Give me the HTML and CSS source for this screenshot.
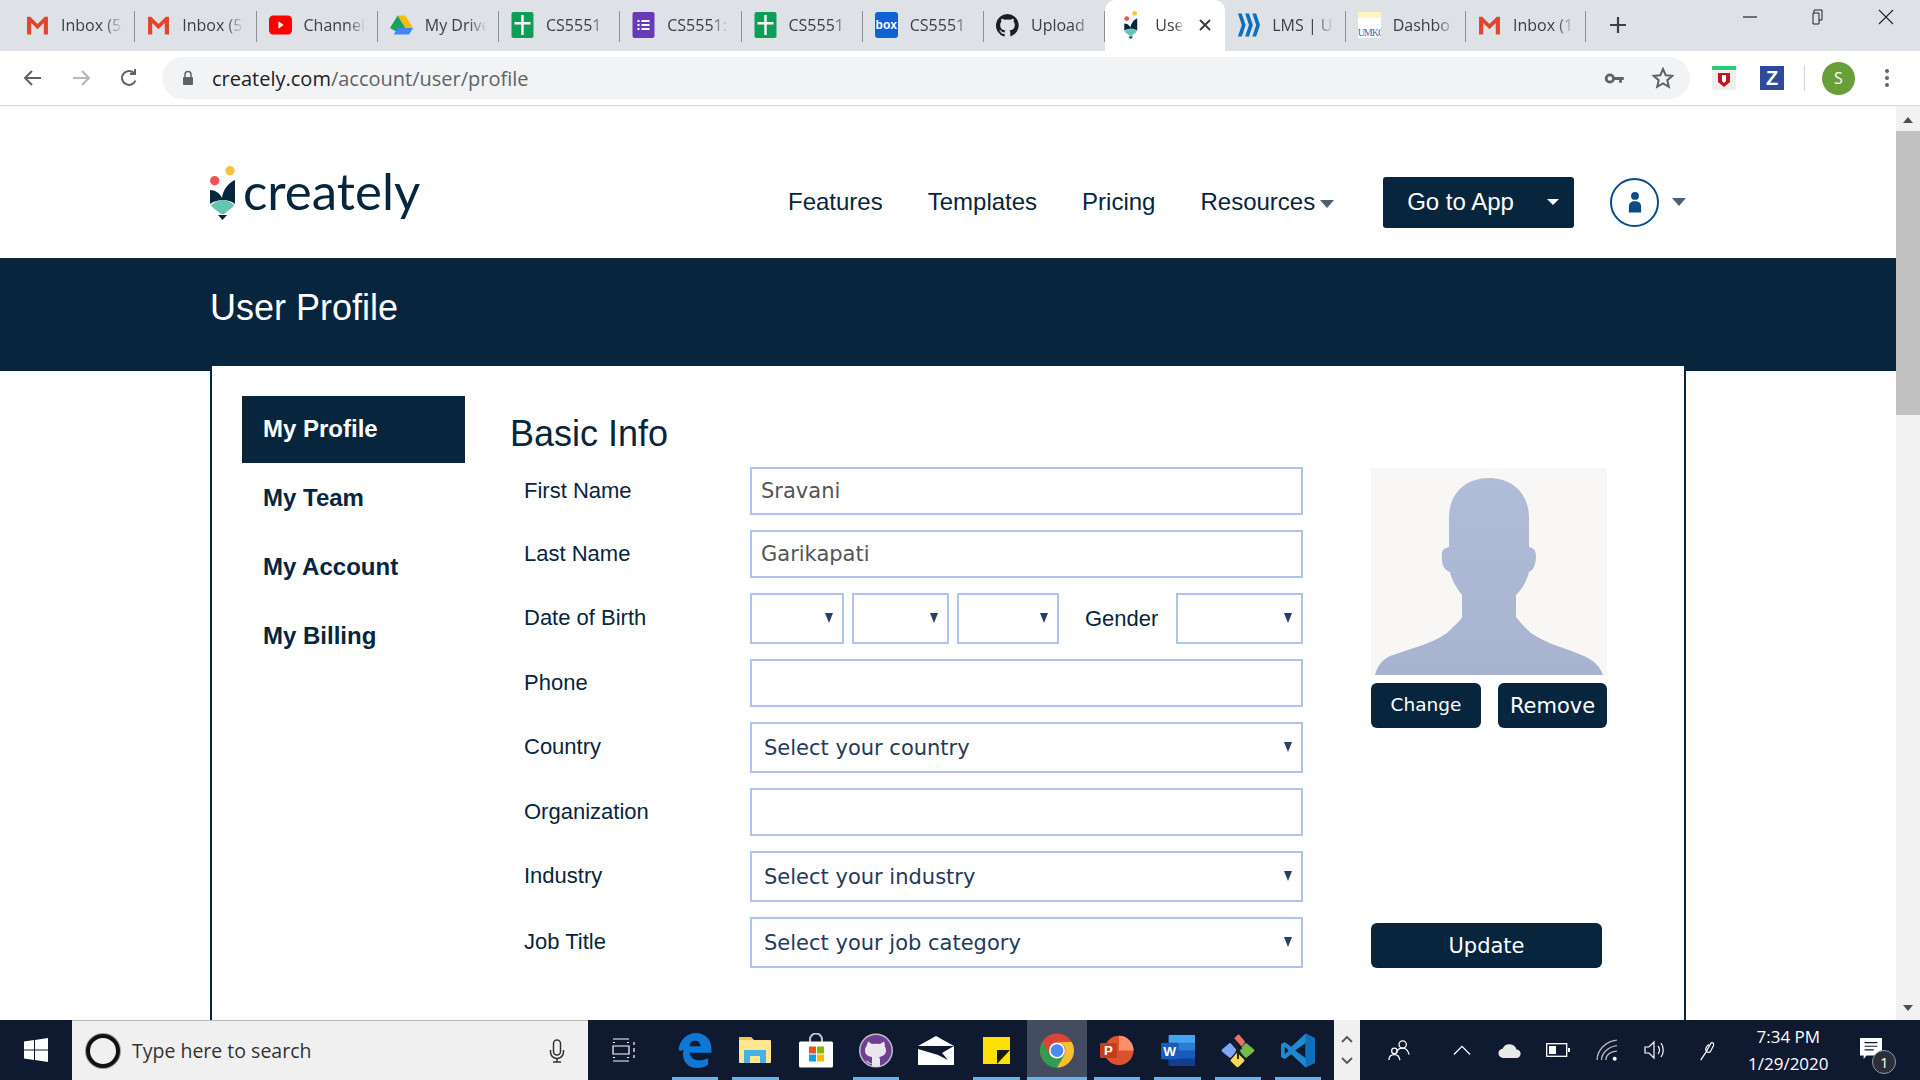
FILE: index.html
```html
<!DOCTYPE html>
<html lang="en">
<head>
  <meta charset="UTF-8">
  <title>User Profile</title>
  <link rel="stylesheet" href="styles.css">
</head>
<body>

<svg class="defs" width="0" height="0">
  <symbol id="gmail" viewBox="0 0 22 22">
    <path d="M1 3h3l7 7 7-7h3v17h-4V9l-6 6-6-6v11H1z" fill="#e0452f"/>
  </symbol>
  <symbol id="sheets" viewBox="0 0 22 26">
    <rect width="22" height="26" rx="2" fill="#0f9d58"/>
    <path d="M9.800 3h2.400v7H19v2.400h-6.800V23H9.800V12.400H3V10h6.800z" fill="#fff"/>
  </symbol>
  <symbol id="creately" viewBox="0 0 26 54">
    <circle cx="20" cy="4.7" r="4.7" fill="#fdc33f"/>
    <circle cx="4.7" cy="14.7" r="4.7" fill="#f0524f"/>
    <path d="M0 24c5 0 10 3 12 8 1-8 6-15 13-18v24c-4-3-8-4-12-4s-9 1-13 4z" fill="#07263d"/>
    <path d="M1 39c3-3 8-5 12-5s8 2 11 5l-1 2-9 7h-3l-9-7z" fill="#65c6b4"/>
    <path d="M8 49h9l-4.500 5z" fill="#07263d"/>
  </symbol>
</svg>

<div class="browser">
  <div class="tabstrip">
    <div class="tab"><div class="tab-inner">
      <svg class="favicon"><use href="#gmail"/></svg>
      <span class="tab-title">Inbox (5</span>
    </div></div>
    <div class="tab"><div class="tab-inner">
      <svg class="favicon"><use href="#gmail"/></svg>
      <span class="tab-title">Inbox (5</span>
    </div></div>
    <div class="tab"><div class="tab-inner">
      <svg class="favicon" viewBox="0 0 22 22"><rect y="2" width="22" height="18" rx="4" fill="#f00"/><path d="M9 7.500l5 3.500-5 3.500z" fill="#fff"/></svg>
      <span class="tab-title">Channel</span>
    </div></div>
    <div class="tab"><div class="tab-inner">
      <svg class="favicon" viewBox="0 0 24 22"><path d="M8 1h8l8 13h-8z" fill="#fbbc04"/><path d="M8 1l8 13-4 7L0 14z" fill="#0f9d58" opacity=".95"/><path d="M8 14h16l-4 7H4z" fill="#4285f4"/></svg>
      <span class="tab-title">My Drive</span>
    </div></div>
    <div class="tab"><div class="tab-inner">
      <svg class="favicon"><use href="#sheets"/></svg>
      <span class="tab-title">CS5551</span>
    </div></div>
    <div class="tab"><div class="tab-inner">
      <svg class="favicon" viewBox="0 0 22 26"><rect width="22" height="26" rx="2" fill="#673ab7"/><path d="M5 8h2v2H5zM9 8h8v2H9zM5 12h2v2H5zM9 12h8v2H9zM5 16h2v2H5zM9 16h8v2H9z" fill="#fff"/></svg>
      <span class="tab-title">CS5551:</span>
    </div></div>
    <div class="tab"><div class="tab-inner">
      <svg class="favicon"><use href="#sheets"/></svg>
      <span class="tab-title">CS5551</span>
    </div></div>
    <div class="tab"><div class="tab-inner">
      <span class="favicon box-icon">box</span>
      <span class="tab-title">CS5551</span>
    </div></div>
    <div class="tab"><div class="tab-inner">
      <svg class="favicon" viewBox="0 0 24 24"><path d="M12 .5a12 12 0 0 0-3.800 23.400c.6.100.8-.3.800-.6v-2.100c-3.300.7-4-1.600-4-1.600-.5-1.400-1.300-1.800-1.300-1.800-1.100-.7.100-.7.100-.7 1.200.1 1.800 1.200 1.800 1.200 1.100 1.800 2.800 1.300 3.500 1 .1-.8.400-1.300.8-1.600-2.700-.3-5.500-1.300-5.500-5.900 0-1.300.5-2.400 1.200-3.200-.1-.3-.5-1.500.1-3.200 0 0 1-.3 3.300 1.200a11.500 11.500 0 0 1 6 0c2.300-1.500 3.300-1.200 3.300-1.200.6 1.700.2 2.900.1 3.200.8.800 1.200 1.900 1.200 3.200 0 4.600-2.800 5.600-5.500 5.900.4.400.8 1.100.8 2.200v3.300c0 .3.200.7.800.6A12 12 0 0 0 12 .5z" fill="#1b1f23"/></svg>
      <span class="tab-title">Upload</span>
    </div></div>
    <div class="tab tab-active"><div class="tab-inner">
      <svg class="favicon favicon-small"><use href="#creately"/></svg>
      <span class="tab-title">User</span>
      <svg class="tab-close" viewBox="0 0 12 12"><path d="M1 1l10 10M11 1L1 11" stroke="#3c4043" stroke-width="2"/></svg>
    </div></div>
    <div class="tab"><div class="tab-inner">
      <svg class="favicon" viewBox="0 0 24 24"><path d="M1 0h4l4 12-4 12H1l4-12zM8.500 0h4l4 12-4 12h-4l4-12zM16 0h4l4 12-4 12h-4l4-12z" fill="#0d6ebe"/></svg>
      <span class="tab-title">LMS | U</span>
    </div></div>
    <div class="tab"><div class="tab-inner">
      <span class="favicon umkc-icon">UMKC</span>
      <span class="tab-title">Dashbo</span>
    </div></div>
    <div class="tab"><div class="tab-inner">
      <svg class="favicon"><use href="#gmail"/></svg>
      <span class="tab-title">Inbox (1</span>
    </div></div>
    <svg class="new-tab" viewBox="0 0 18 18"><path d="M9 1v16M1 9h16" stroke="#3c4043" stroke-width="2.200"/></svg>
    <div class="window-btns">
      <svg viewBox="0 0 16 16"><path d="M1 8h14" stroke="#222" stroke-width="1.200"/></svg>
      <svg viewBox="0 0 16 16"><path d="M4 4V1h8v10h-3M3 4h6v11H3z" fill="none" stroke="#222"/></svg>
      <svg viewBox="0 0 16 16"><path d="M1 1l14 14M15 1L1 15" stroke="#222" stroke-width="1.100"/></svg>
    </div>
  </div>

  <div class="toolbar">
    <svg class="tool-icon" viewBox="0 0 20 20"><path d="M18 10H3M9 3l-7 7 7 7" fill="none" stroke="#5f6368" stroke-width="2"/></svg>
    <svg class="tool-icon" viewBox="0 0 20 20"><path d="M2 10h15M11 3l7 7-7 7" fill="none" stroke="#b4b6b9" stroke-width="2"/></svg>
    <svg class="tool-icon" viewBox="0 0 20 20"><path d="M16.500 12.500A7 7 0 1 1 15 5M16 1v5h-5" fill="none" stroke="#5f6368" stroke-width="2"/></svg>
    <div class="omnibox">
      <svg class="lock" viewBox="0 0 12 16"><path d="M3 7V4.500a3 3 0 0 1 6 0V7" fill="none" stroke="#5f6368" stroke-width="1.500"/><rect x="1" y="7" width="10" height="8" rx="1" fill="#5f6368"/></svg>
      <span class="url"><b>creately.com</b>/account/user/profile</span>
      <svg class="key" viewBox="0 0 22 14"><circle cx="6" cy="7" r="4" fill="none" stroke="#5f6368" stroke-width="3"/><path d="M10 5.500h11v3h-2v3h-3v-3h-6z" fill="#5f6368"/></svg>
      <svg class="star" viewBox="0 0 22 22"><path d="M11 2l2.700 6.200 6.700.6-5.100 4.400 1.500 6.600L11 16.300l-5.800 3.500 1.500-6.600-5.100-4.400 6.700-.6z" fill="none" stroke="#5f6368" stroke-width="2"/></svg>
    </div>
    <svg class="ext-icon" viewBox="0 0 24 24"><rect width="24" height="24" rx="1" fill="#eee"/><rect width="24" height="4" fill="#2ecc71"/><path d="M6 7h12v9l-6 5-6-5z" fill="#c4161c"/><path d="M10 9h4v6l-2 2-2-2z" fill="#fff"/></svg>
    <span class="ext-z">Z</span>
    <span class="toolbar-sep"></span>
    <span class="profile-dot">S</span>
    <svg class="menu-dots" viewBox="0 0 4 18"><circle cx="2" cy="2" r="2"/><circle cx="2" cy="9" r="2"/><circle cx="2" cy="16" r="2"/></svg>
  </div>

  <div class="viewport">
    <div class="page">
      <header class="site-header">
        <div class="logo">
          <svg class="logo-mark"><use href="#creately"/></svg>
          <span class="logo-text">creately</span>
        </div>
        <nav class="nav">
          <a>Features</a>
          <a>Templates</a>
          <a>Pricing</a>
          <a class="nav-caret">Resources</a>
        </nav>
        <button class="app-btn">Go to App</button>
        <span class="user-circle">
          <svg viewBox="0 0 16 24"><circle cx="8" cy="5" r="4.500" fill="#0a4c86"/><path d="M1 24v-7c0-4 3-6 7-6s7 2 7 6v7z" fill="#0a4c86"/></svg>
        </span>
        <span class="user-caret"></span>
      </header>

      <div class="banner">
        <h1>User Profile</h1>
      </div>

      <div class="card">
        <ul class="side-menu">
          <li class="active">My Profile</li>
          <li>My Team</li>
          <li>My Account</li>
          <li>My Billing</li>
        </ul>

        <section class="profile">
          <h2>Basic Info</h2>
          <div class="profile-body">
            <form class="fields">
              <div class="row">
                <label>First Name</label>
                <input class="text-input" type="text" value="Sravani">
              </div>
              <div class="row">
                <label>Last Name</label>
                <input class="text-input" type="text" value="Garikapati">
              </div>
              <div class="row">
                <label>Date of Birth</label>
                <div class="select sel-day"><select></select></div>
                <div class="select sel-month"><select></select></div>
                <div class="select sel-year"><select></select></div>
                <label class="gender-label">Gender</label>
                <div class="select sel-gender"><select></select></div>
              </div>
              <div class="row">
                <label>Phone</label>
                <input class="text-input" type="text">
              </div>
              <div class="row">
                <label>Country</label>
                <div class="select sel-wide"><select><option>Select your country</option></select></div>
              </div>
              <div class="row">
                <label>Organization</label>
                <input class="text-input" type="text">
              </div>
              <div class="row">
                <label>Industry</label>
                <div class="select sel-wide"><select><option>Select your industry</option></select></div>
              </div>
              <div class="row">
                <label>Job Title</label>
                <div class="select sel-wide"><select><option>Select your job category</option></select></div>
              </div>
            </form>

            <div class="photo-col">
              <svg class="photo" viewBox="0 0 236 207">
                <defs>
                  <linearGradient id="sil" x1="0" y1="0" x2="0" y2="1">
                    <stop offset="0" stop-color="#b1bdd8"/>
                    <stop offset="1" stop-color="#a7b3cf"/>
                  </linearGradient>
                </defs>
                <path d="M4 207C6 198 12 190 22 187C42 180 62 175 76 165C84 157 90 152 91 149L91 127C84 118 80 110 79 104C72 102 70 94 71 85C71 82 74 80 78 79L78 50C78 25 95 10 118 10C141 10 158 25 158 50L158 79C163 80 165 83 165 88C165 95 163 102 158 104C156 112 152 120 145 127L145 149C150 155 155 161 160 165C175 176 195 180 213 188C224 193 229 199 232 207Z" fill="url(#sil)"/>
              </svg>
              <div class="photo-btns">
                <button class="btn btn-change">Change</button>
                <button class="btn btn-remove">Remove</button>
              </div>
              <button class="btn btn-update">Update</button>
            </div>
          </div>
        </section>
      </div>
    </div>

    <div class="scrollbar">
      <span class="scroll-up"></span>
      <span class="scroll-thumb"></span>
      <span class="scroll-down"></span>
    </div>
  </div>

  <div class="taskbar">
    <div class="start">
      <svg viewBox="0 0 24 24"><path d="M0 3.500l10-1.400v9.400H0zM11 2l13-2v11.500H11zM0 12.500h10v9.400L0 20.500zM11 12.500h13V24l-13-2z" fill="#fff"/></svg>
    </div>
    <div class="search">
      <span class="cortana"></span>
      <span class="search-text">Type here to search</span>
      <svg class="mic" viewBox="0 0 16 24"><rect x="4.500" y="1" width="7" height="15" rx="3.500" fill="none" stroke="#333" stroke-width="1.500"/><path d="M1.500 11v2a6.500 6.500 0 0 0 13 0v-2M8 20v3M4 23h8" fill="none" stroke="#333" stroke-width="1.500"/></svg>
    </div>
    <div class="task-view">
      <svg viewBox="0 0 24 24"><path d="M1 1h16M1 4.500h2M15 4.500h2M1 8h16v8H1zM1 19.500h2M15 19.500h2M1 23h16M22 4v3M22 10v4M22 17v3" fill="none" stroke="#fff" stroke-width="1.200"/></svg>
    </div>
    <div class="apps">
      <div class="app running">
        <svg viewBox="0 0 30 32"><path d="M0 15C1 6 8 0 16 0c8 0 14 6 14 14v4H10c1 5 5 7 9 7 3 0 6-1 8-2v6c-3 2-6 3-10 3-8 0-13-6-13-12 0-2 0-3 1-5-2 1-4 2-5 0zM10 12h10c0-3-2-5-5-5s-5 2-5 5z" fill="#0f78d4"/></svg>
      </div>
      <div class="app running">
        <svg class="icon-explorer" viewBox="0 0 32 26"><path d="M0 1a1 1 0 0 1 1-1h11l3 3h16a1 1 0 0 1 1 1v21a1 1 0 0 1-1 1H1a1 1 0 0 1-1-1z" fill="#ffe68f"/><path d="M0 1a1 1 0 0 1 1-1h11l2 3H0z" fill="#f3c842"/><path d="M5 26V13h22v13h-6v-7H11v7z" fill="#45b2e3"/></svg>
      </div>
      <div class="app">
        <svg viewBox="0 0 34 34"><path d="M11 11V6a6 6 0 0 1 12 0v5" fill="none" stroke="#c4c4c4" stroke-width="2"/><rect y="8" width="34" height="26" rx="1.500" fill="#fff"/><rect x="10" y="13" width="7" height="7" fill="#f25022"/><rect x="18" y="13" width="7" height="7" fill="#7fba00"/><rect x="10" y="21" width="7" height="7" fill="#00a4ef"/><rect x="18" y="21" width="7" height="7" fill="#ffb900"/></svg>
      </div>
      <div class="app running">
        <svg viewBox="0 0 34 34"><circle cx="17" cy="17" r="17" fill="#c4bfcc"/><circle cx="17" cy="17" r="15.500" fill="#6e3f92"/><path d="M9 8l4 2.500c2.500-.5 5.500-.5 8 0L25 8c.8 2 1 3.500.7 5 1 1.200 1.300 2.500 1.300 4 0 4-3 6-7 6.500.5.500 1 1.500 1 3v6.500h-8V30c-3 .5-5-.5-6-3 1 .2 2 .5 3 2 1 .5 2 .5 3 .2v-5.700c-4-.5-7-2.500-7-6.500 0-1.500.3-2.800 1.300-4C8 11.500 8.200 10 9 8z" fill="#e9e6ee"/></svg>
      </div>
      <div class="app">
        <svg class="icon-mail" viewBox="0 0 36 29"><path d="M0 10L18 0l18 10v19H0z" fill="#fff"/><path d="M0 10h36L24 17l6 7-10-5L0 13z" fill="#0f1a30"/></svg>
      </div>
      <div class="app running">
        <svg class="icon-sticky" viewBox="0 0 27 27"><rect width="27" height="27" fill="#ffe100"/><path d="M14 13h13L14 27z" fill="#17181a"/></svg>
      </div>
      <div class="app app-active">
        <svg viewBox="0 0 32 32"><circle cx="16" cy="16" r="16" fill="#db4437"/><path d="M16 8h13.800A16 16 0 0 1 16 32l6.900-12A8 8 0 0 0 16 8z" fill="#fbc02d"/><path d="M2.200 8A16 16 0 0 0 16 32l6.900-12H9.100z" fill="#2e9e4f"/><circle cx="16" cy="16" r="7.500" fill="#fff"/><circle cx="16" cy="16" r="6" fill="#4a8af4"/></svg>
      </div>
      <div class="app running">
        <svg viewBox="0 0 36 32"><circle cx="20" cy="16" r="15.500" fill="#d9532c"/><path d="M20 .5A15.500 15.500 0 0 1 35.500 16H20z" fill="#ff8f6b"/><rect y="8" width="18" height="16" rx="1.500" fill="#c43e1c"/><text x="9" y="21" class="icon-letter">P</text></svg>
      </div>
      <div class="app running">
        <svg viewBox="0 0 35 32"><rect x="8" width="27" height="32" rx="1.500" fill="#2b7cd3"/><rect x="8" width="27" height="8" fill="#41a5ee"/><rect x="8" y="16" width="27" height="8" fill="#185abd"/><rect x="8" y="24" width="27" height="8" fill="#103f91"/><rect y="8" width="18" height="17" rx="1.500" fill="#185abd"/><text x="9" y="21.500" class="icon-letter">W</text></svg>
      </div>
      <div class="app running">
        <svg viewBox="0 0 36 36"><path d="M14 5l3-3a2 2 0 0 1 3 0l5 6a2 2 0 0 1 0 2l-3 4z" fill="#e8706a"/><path d="M8 11a2 2 0 0 1 3 0l6 7-6 7a2 2 0 0 1-3 0l-7-6a2 2 0 0 1 0-2z" fill="#7ea7f8"/><path d="M25 11a2 2 0 0 1 3 0l7 6a2 2 0 0 1 0 2l-7 6a2 2 0 0 1-3 0l-6-7z" fill="#72bb4d"/><path d="M17 20l7 7a2 2 0 0 1 0 3l-5 5a2 2 0 0 1-3 0l-5-5a2 2 0 0 1 0-3z" fill="#fbd75b"/><path d="M14 8l4 10 4-3M18 18v9" fill="none" stroke="#222" stroke-width="2"/><circle cx="18" cy="19" r="2.500" fill="#222"/></svg>
      </div>
      <div class="app running">
        <svg viewBox="0 0 36 36"><path d="M26 0l10 5v26l-10 5-15-14-7 5-4-2V11l4-2 7 5z" fill="#1f8ad2"/><path d="M26 10L15 18l11 8z" fill="#0f1a30"/><path d="M4 14v8l4-4z" fill="#0f1a30"/><path d="M26 0l10 5v26l-10 5z" fill="#0f6fb8"/></svg>
      </div>
    </div>
    <div class="tray-scroll">
      <svg viewBox="0 0 12 8"><path d="M1 7l5-5 5 5" fill="none" stroke="#555" stroke-width="1.800"/></svg>
      <svg viewBox="0 0 12 8"><path d="M1 1l5 5 5-5" fill="none" stroke="#555" stroke-width="1.800"/></svg>
    </div>
    <div class="tray">
      <svg viewBox="0 0 24 24"><g fill="none" stroke="#fff" stroke-width="1.400"><circle cx="16" cy="6" r="4"/><path d="M9 15c1-3 3-5 7-5s6 3 7 7"/><circle cx="7" cy="13" r="3"/><path d="M1 23c0-4 2-6 6-6s5 2 6 6"/></g></svg>
      <svg viewBox="0 0 20 12" class="tray-chevron"><path d="M1 11l9-9 9 9" fill="none" stroke="#fff" stroke-width="1.400"/></svg>
      <svg viewBox="0 0 26 18" class="tray-cloud"><path d="M6 17a5 5 0 0 1-1-10 8 8 0 0 1 15 1 4.500 4.500 0 0 1 0 9z" fill="#e8e8e8"/></svg>
      <svg viewBox="0 0 24 14" class="tray-battery"><rect x=".7" y=".7" width="20" height="12.600" fill="none" stroke="#fff" stroke-width="1.300"/><rect x="3" y="3" width="7" height="8" fill="#fff"/><rect x="22" y="5" width="2" height="4" fill="#fff"/></svg>
      <svg viewBox="0 0 20 20"><g fill="none" stroke="#bbb" stroke-width="1.200"><path d="M1 19C1 10 9 2 19 1"/><path d="M5 19c0-6 6-12 14-13"/><path d="M9 19c0-4 4-8 10-8"/></g><circle cx="17" cy="18" r="1.800" fill="#fff"/></svg>
      <svg viewBox="0 0 22 22"><path d="M1 8h4l5-5v16l-5-5H1zM14 7c2 2 2 6 0 8M17 4c3 4 3 10 0 14" fill="none" stroke="#fff" stroke-width="1.200"/></svg>
      <svg viewBox="0 0 20 24"><path d="M2 23c2-3 4-6 6-9l5-9c1-2 4-1 3 2l-3 6c-1 2-3 2-4 1M9 14c-3-2-1-6 2-8" fill="none" stroke="#fff" stroke-width="1.300"/></svg>
      <div class="clock"><span>7:34 PM</span><span>1/29/2020</span></div>
      <div class="notify">
        <svg viewBox="0 0 24 24"><path d="M0 0h24v19H7l-3 4v-4H0z" fill="#fff"/><path d="M5 5h14M5 9h14M5 13h10" stroke="#0f1a30" stroke-width="1.300"/></svg>
        <span class="notify-badge">1</span>
      </div>
    </div>
  </div>
</div>

</body>
</html>
```
FILE: styles.css
```css
* {
  box-sizing: border-box;
}
html, body {
  margin: 0;
  padding: 0;
  height: 1080px;
  overflow: hidden;
}
body {
  font-family: "Liberation Sans", Arial, sans-serif;
  color: #07263d;
  background-color: #fff;
}
.defs {
  position: absolute;
}
.browser {
  display: flex;
  flex-direction: column;
  width: 1920px;
  height: 1080px;
}

/* tabs */
.tabstrip {
  display: flex;
  align-items: flex-start;
  height: 51px;
  padding-left: 14px;
  background-color: #dee1e6;
  flex-shrink: 0;
}
.tab {
  width: 121.25px;
  height: 51px;
  padding-top: 11px;
  flex-shrink: 0;
}
.tab-active ~ .tab {
  width: 120.4px;
}
.tab-inner {
  display: flex;
  align-items: center;
  height: 31px;
  padding: 0 0 3px 12px;
  border-right: 1px solid #8d9094;
  gap: 12px;
}
.tab-active {
  width: 120px;
  background-color: #fff;
  border-radius: 10px 10px 0 0;
}
.tab-active .tab-inner {
  border-right: none;
  padding-left: 19px;
  gap: 17px;
}
.favicon {
  width: 23px;
  height: 26px;
  flex-shrink: 0;
}
.favicon-small {
  width: 14px;
  height: 28px;
}
.tab-title {
  width: 62px;
  overflow: hidden;
  white-space: nowrap;
  font-family: "Open Sans", sans-serif;
  font-size: 16px;
  color: #3c4043;
  -webkit-mask-image: linear-gradient(to right, #000 70%, transparent);
  mask-image: linear-gradient(to right, #000 70%, transparent);
}
.tab-active .tab-title {
  width: 29px;
}
.tab-close {
  width: 12px;
  height: 12px;
  margin-left: -2px;
}
.box-icon {
  display: flex;
  align-items: center;
  justify-content: center;
  height: 26px;
  border-radius: 3px;
  background-color: #0f62d6;
  color: #fff;
  font-family: "Liberation Sans", sans-serif;
  font-size: 12px;
  font-weight: bold;
}
.umkc-icon {
  display: flex;
  align-items: flex-end;
  height: 26px;
  overflow: hidden;
  background: linear-gradient(#fff3c0 0 25%, #fff 25%);
  color: #2f6fc4;
  font-family: "Liberation Serif", serif;
  font-size: 10px;
  letter-spacing: -1px;
}
.new-tab {
  width: 18px;
  height: 18px;
  margin: 16px 0 0 23px;
}
.window-btns {
  display: flex;
  gap: 52px;
  margin: 9px 0 0 auto;
  padding-right: 26px;
}
.window-btns svg {
  width: 16px;
  height: 16px;
}

/* address bar */
.toolbar {
  display: flex;
  align-items: center;
  height: 55px;
  padding-left: 23px;
  border-bottom: 1px solid #d8d9db;
  flex-shrink: 0;
}
.tool-icon {
  width: 20px;
  height: 20px;
  margin-right: 28px;
  flex-shrink: 0;
}
.omnibox {
  display: flex;
  align-items: center;
  width: 1528px;
  height: 42px;
  margin-left: -5px;
  padding-left: 19px;
  border-radius: 21px;
  background-color: #f1f3f4;
}
.lock {
  width: 14px;
  height: 16px;
}
.url {
  margin-left: 17px;
  font-family: "Open Sans", sans-serif;
  font-size: 20px;
  color: #5f6368;
}
.url b {
  font-weight: normal;
  color: #202124;
}
.key {
  width: 21px;
  height: 13px;
  margin-left: auto;
}
.star {
  width: 22px;
  height: 22px;
  margin: 0 16px 0 27px;
}
.ext-icon {
  width: 24px;
  height: 24px;
  margin-left: 22px;
}
.ext-z {
  width: 24px;
  height: 24px;
  margin-left: 24px;
  background-color: #2f4a9c;
  color: #fff;
  font-size: 20px;
  font-weight: bold;
  line-height: 24px;
  text-align: center;
}
.toolbar-sep {
  width: 1px;
  height: 26px;
  margin-left: 20px;
  background-color: #d5d6d8;
}
.profile-dot {
  width: 33px;
  height: 33px;
  margin-left: 17px;
  border-radius: 50%;
  background-color: #689f38;
  color: #fff;
  font-family: "Open Sans", sans-serif;
  font-size: 16px;
  line-height: 33px;
  text-align: center;
}
.menu-dots {
  width: 4px;
  height: 18px;
  margin-left: 30px;
  fill: #5f6368;
}

/* page */
.viewport {
  display: flex;
  flex: 1;
  min-height: 0;
}
.page {
  flex: 1;
  min-width: 0;
  overflow: hidden;
}
.scrollbar {
  display: flex;
  flex-direction: column;
  align-items: center;
  width: 24px;
  background-color: #f1f1f1;
}
.scroll-up {
  margin-top: 11px;
  border: 5px solid transparent;
  border-top: none;
  border-bottom: 6px solid #505050;
}
.scroll-thumb {
  width: 100%;
  height: 284px;
  margin-top: 8px;
  background-color: #c1c1c1;
}
.scroll-down {
  margin-top: auto;
  margin-bottom: 9px;
  border: 5px solid transparent;
  border-bottom: none;
  border-top: 6px solid #505050;
}
.site-header {
  display: flex;
  align-items: center;
  height: 152px;
  padding: 40px 0 0 210px;
}
.logo {
  display: flex;
  align-items: center;
  width: 578px;
  margin-top: -19px;
}
.logo-mark {
  width: 26px;
  height: 54px;
}
.logo-text {
  margin: 0 0 4px 7px;
  font-family: Lato, sans-serif;
  font-size: 51px;
  line-height: 54px;
  color: #07263d;
}
.nav {
  display: flex;
  gap: 45px;
  font-size: 24px;
  color: #07263d;
}
.nav-caret::after {
  content: "";
  display: inline-block;
  margin-left: 5px;
  border: 7px solid transparent;
  border-bottom: none;
  border-top: 8px solid #4d6073;
  vertical-align: 2px;
}
.app-btn {
  display: flex;
  align-items: center;
  width: 191px;
  height: 51px;
  margin-left: 49px;
  padding: 0 0 0 24px;
  border: none;
  border-radius: 3px;
  background-color: #07263d;
  color: #fff;
  font-family: "Liberation Sans", sans-serif;
  font-size: 24px;
}
.app-btn::after {
  content: "";
  margin-left: 33px;
  border: 6px solid transparent;
  border-bottom: none;
  border-top: 6px solid #fff;
}
.user-circle {
  display: flex;
  align-items: center;
  justify-content: center;
  width: 49px;
  height: 49px;
  margin-left: 36px;
  border: 2px solid #0a4c86;
  border-radius: 50%;
}
.user-circle svg {
  width: 14px;
  height: 22px;
}
.user-caret {
  margin-left: 13px;
  border: 7px solid transparent;
  border-bottom: none;
  border-top: 8px solid #4d6073;
}
.banner {
  height: 113px;
  padding: 29px 0 0 210px;
  background-color: #07263d;
}
.banner h1 {
  margin: 0;
  font-size: 36px;
  font-weight: normal;
  line-height: 41px;
  color: #fff;
}

/* card */
.card {
  display: flex;
  position: relative;
  width: 1476px;
  height: 700px;
  margin: -7px 0 0 210px;
  padding: 30px 0 0 30px;
  border: 2px solid #07263d;
  background-color: #fff;
}
.side-menu {
  display: flex;
  flex-direction: column;
  gap: 2px;
  width: 223px;
  margin: 0;
  padding: 0;
  list-style: none;
  flex-shrink: 0;
}
.side-menu li {
  height: 67px;
  padding-left: 21px;
  font-size: 24px;
  font-weight: bold;
  line-height: 66px;
  color: #07263d;
}
.side-menu .active {
  background-color: #07263d;
  color: #fff;
}
.profile {
  margin-left: 45px;
}
.profile h2 {
  margin: 0;
  height: 71px;
  padding-top: 17px;
  font-size: 36px;
  font-weight: normal;
  line-height: 41px;
  color: #07263d;
}
.profile-body {
  display: flex;
}
.fields {
  display: flex;
  flex-direction: column;
  gap: 15px;
  width: 793px;
  margin: 0;
}
.row {
  display: flex;
  align-items: center;
}
.row label {
  width: 240px;
  padding: 0 0 1px 14px;
  font-size: 22px;
  color: #07263d;
  flex-shrink: 0;
}
.row .gender-label {
  width: auto;
  padding: 0;
  margin: 0 18px 0 26px;
}
.text-input {
  width: 553px;
  height: 48px;
  padding: 0 9px;
  border: 2px solid #aec4ee;
  border-radius: 0;
  outline: none;
  font-family: "DejaVu Sans", sans-serif;
  font-size: 21px;
  color: #555;
}
.select {
  position: relative;
  height: 51px;
  flex-shrink: 0;
}
.select select {
  width: 100%;
  height: 100%;
  padding: 0 12px;
  border: 2px solid #aec4ee;
  border-radius: 0;
  outline: none;
  background-color: #fff;
  appearance: none;
  font-family: "DejaVu Sans", sans-serif;
  font-size: 21px;
  color: #233a5c;
}
.select::after {
  content: "";
  position: absolute;
  top: 20px;
  right: 11px;
  border: 4.5px solid transparent;
  border-bottom: none;
  border-top: 10px solid #2b3f66;
}
.sel-day {
  width: 94px;
}
.sel-month {
  width: 97px;
  margin-left: 8px;
}
.sel-year {
  width: 102px;
  margin-left: 8px;
}
.sel-gender {
  width: 127px;
}
.sel-wide {
  width: 553px;
}

/* photo column */
.photo-col {
  display: flex;
  flex-direction: column;
  align-items: flex-start;
  width: 236px;
  margin: 1px 0 0 68px;
}
.photo {
  display: block;
  width: 236px;
  height: 207px;
  background-color: #f8f7f5;
}
.photo-btns {
  display: flex;
  justify-content: space-between;
  width: 100%;
  margin-top: 8px;
}
.btn {
  height: 45px;
  padding: 0;
  border: none;
  border-radius: 6px;
  background-color: #07263d;
  color: #fff;
  font-family: "DejaVu Sans", sans-serif;
  font-size: 21px;
}
.btn-change {
  width: 110px;
  font-size: 18.500px;
  padding-bottom: 3px;
}
.btn-remove {
  width: 109px;
}
.btn-update {
  width: 231px;
  margin-top: 195px;
}

/* taskbar */
.taskbar {
  display: flex;
  align-items: stretch;
  height: 60px;
  background-color: #0f1a30;
  flex-shrink: 0;
}
.start {
  display: flex;
  align-items: center;
  justify-content: center;
  width: 72px;
}
.start svg {
  width: 24px;
  height: 24px;
}
.search {
  display: flex;
  align-items: center;
  width: 516px;
  padding-left: 14px;
  border-top: 1px solid #b8b8b8;
  background-color: #f0f0f0;
}
.cortana {
  width: 34px;
  height: 34px;
  border: 4px solid #111;
  border-radius: 50%;
  background-color: #f0f0f0;
  box-shadow: 0 0 0 1px #999;
}
.search-text {
  margin-left: 12px;
  font-family: "Open Sans", sans-serif;
  font-size: 19.500px;
  color: #333;
}
.mic {
  width: 16px;
  height: 24px;
  margin-left: auto;
  margin-right: 23px;
}
.task-view {
  display: flex;
  align-items: center;
  justify-content: center;
  width: 77px;
  padding-right: 6px;
}
.task-view svg {
  width: 24px;
  height: 24px;
}
.apps {
  display: flex;
}
.app {
  display: flex;
  align-items: center;
  justify-content: center;
  position: relative;
  width: 60.3px;
}
.app svg {
  width: 34px;
  height: 35px;
}
.app .icon-explorer {
  width: 32px;
  height: 26px;
}
.app .icon-mail {
  width: 36px;
  height: 29px;
}
.app .icon-sticky {
  width: 27px;
  height: 27px;
}
.running::after, .app-active::after {
  content: "";
  position: absolute;
  left: 7px;
  right: 7px;
  bottom: 0;
  height: 3px;
  background-color: #6cb2ea;
}
.app-active {
  background-color: #434d5f;
}
.app-active::after {
  left: 0;
  right: 0;
}
.icon-letter {
  font-family: "Liberation Sans", sans-serif;
  font-size: 14px;
  font-weight: bold;
  fill: #fff;
  text-anchor: middle;
}
.tray-scroll {
  display: flex;
  flex-direction: column;
  align-items: center;
  justify-content: space-around;
  width: 26px;
  margin-left: 6px;
  padding: 8px 0;
  background-color: #f0f0f0;
}
.tray-scroll svg {
  width: 12px;
  height: 8px;
}
.tray {
  display: grid;
  grid-template-columns: 78px 48px 48px 47px 51px 46px 60px 100px 68px;
  align-items: center;
  justify-items: center;
}
.tray svg {
  width: 22px;
  height: 22px;
}
.tray .tray-chevron {
  width: 18px;
  height: 12px;
}
.tray .tray-cloud {
  width: 24px;
  height: 17px;
}
.tray .tray-battery {
  width: 24px;
  height: 14px;
}
.clock {
  display: flex;
  flex-direction: column;
  align-items: center;
  gap: 7px;
  font-family: "Open Sans", sans-serif;
  font-size: 17px;
  line-height: 20px;
  color: #fff;
}
.notify {
  position: relative;
  width: 24px;
  height: 24px;
}
.notify-badge {
  position: absolute;
  top: 12px;
  left: 12px;
  width: 24px;
  height: 24px;
  border: 1px solid #999;
  border-radius: 50%;
  background-color: #2a2f3a;
  color: #fff;
  font-family: "Open Sans", sans-serif;
  font-size: 15px;
  line-height: 22px;
  text-align: center;
}
```
